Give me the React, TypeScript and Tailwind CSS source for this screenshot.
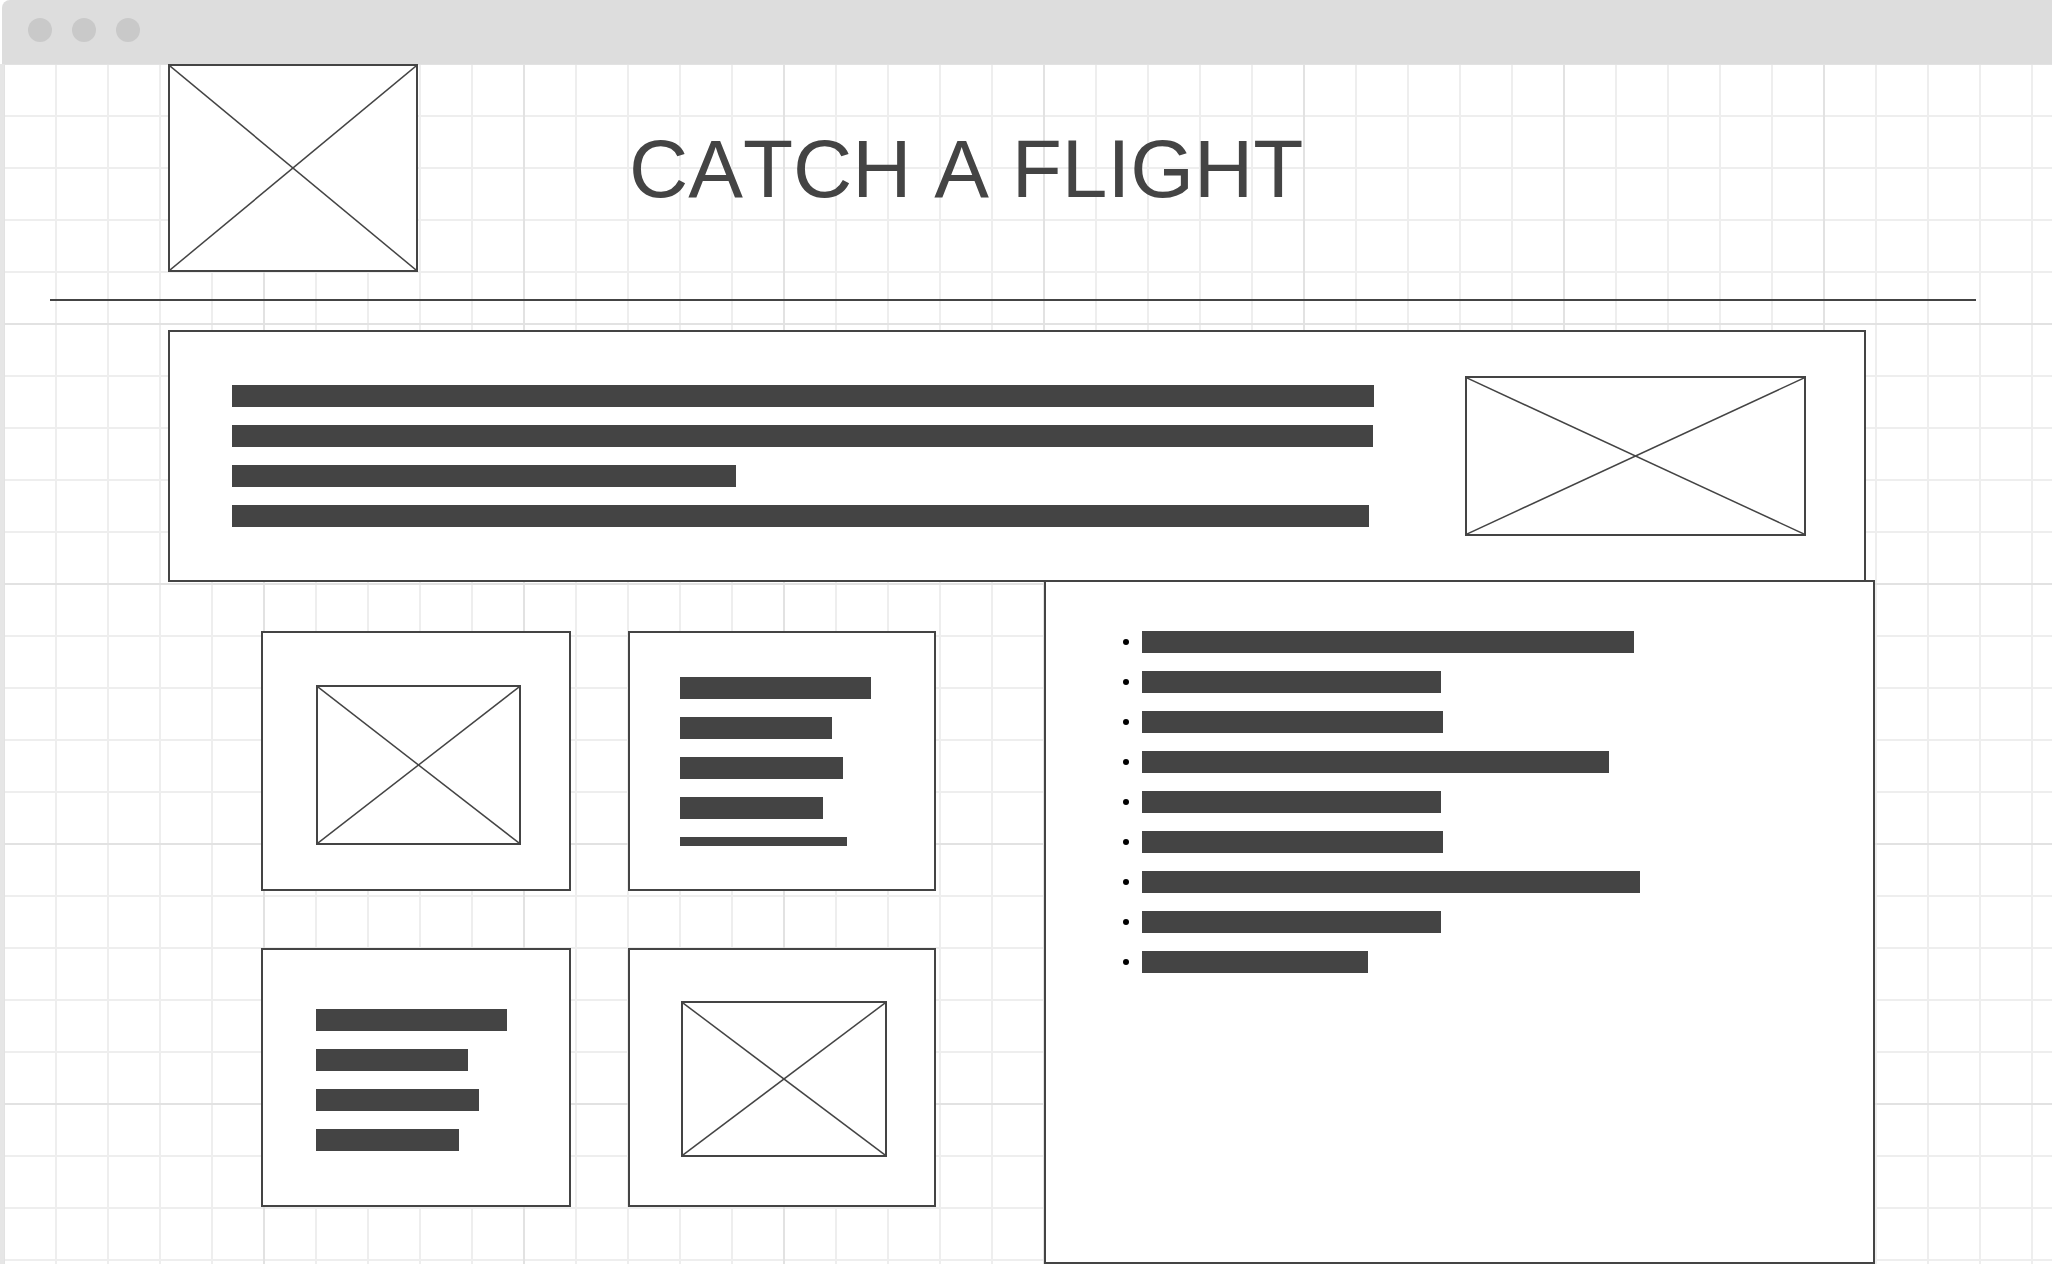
import React from "react";

function XBox({ className }: { className: string }) {
  return (
    <div className={"shrink-0 border-2 border-[#444444] bg-white " + className}>
      <svg className="block h-full w-full" viewBox="0 0 100 100" preserveAspectRatio="none">
        <line x1="0" y1="0" x2="100" y2="100" stroke="#444444" strokeWidth="1.5" vectorEffect="non-scaling-stroke" />
        <line x1="100" y1="0" x2="0" y2="100" stroke="#444444" strokeWidth="1.5" vectorEffect="non-scaling-stroke" />
      </svg>
    </div>
  );
}

function Bar({ className }: { className: string }) {
  return <div className={"bg-[#444444] " + className} />;
}

const heroBars = ["w-[1142px]", "w-[1141px]", "w-[504px]", "w-[1137px]"];
const listBars = [
  "w-[492px]",
  "w-[299px]",
  "w-[301px]",
  "w-[467px]",
  "w-[299px]",
  "w-[301px]",
  "w-[498px]",
  "w-[299px]",
  "w-[226px]",
];

export default function App() {
  return (
    <div className="relative h-[1264px] w-[2052px] overflow-hidden bg-white font-['Liberation_Sans',Arial,sans-serif]">
      {/* browser chrome */}
      <div className="ml-[2px] flex h-[64px] items-start gap-[20px] rounded-tl-[8px] bg-[#dddddd] pl-[26px] pt-[18px]">
        <span className="h-[24px] w-[24px] rounded-full bg-[#c9c9c9]" />
        <span className="h-[24px] w-[24px] rounded-full bg-[#c9c9c9]" />
        <span className="h-[24px] w-[24px] rounded-full bg-[#c9c9c9]" />
      </div>

      <div className="flex h-[1200px]">
        <div className="w-[4px] shrink-0 bg-[#e6e6e6]" />
        <div className="flex-1 [background-image:linear-gradient(to_right,#e2e2e2_2px,transparent_2px),linear-gradient(to_bottom,#e2e2e2_2px,transparent_2px),linear-gradient(to_right,#eeeeee_2px,transparent_2px),linear-gradient(to_bottom,#eeeeee_2px,transparent_2px)] [background-size:260px_260px,260px_260px,52px_52px,52px_52px] [background-position:259px_259px,259px_259px,51px_51px,51px_51px]">
          {/* header */}
          <div className="flex h-[208px] items-start">
            <XBox className="ml-[164px] h-[208px] w-[250px]" />
            <h1 className="ml-[211px] mt-[64px] whitespace-nowrap text-[82px] font-normal leading-[82px] text-[#444444] [font-kerning:none]">
              CATCH A FLIGHT
            </h1>
          </div>

          {/* rule */}
          <div className="ml-[46px] mt-[27px] h-[2px] w-[1926px] bg-[#444444]" />

          {/* hero */}
          <div className="ml-[164px] mt-[29px] flex h-[252px] w-[1698px] items-center border-2 border-[#444444] bg-white pl-[62px]">
            <div className="flex w-[1142px] flex-col gap-[18px]">
              {heroBars.map((w, i) => (
                <Bar key={i} className={"h-[22px] " + w} />
              ))}
            </div>
            <XBox className="ml-[91px] h-[160px] w-[341px]" />
          </div>

          {/* lower section */}
          <div className="-mt-[2px] flex items-start">
            <div className="ml-[257px] mt-[51px] grid grid-cols-[310px_308px] grid-rows-[260px_259px] gap-[57px]">
              <div className="border-2 border-[#444444] bg-white pl-[53px] pt-[52px]">
                <XBox className="h-[160px] w-[205px]" />
              </div>
              <div className="flex flex-col gap-[18px] border-2 border-[#444444] bg-white pl-[50px] pt-[44px]">
                <Bar className="h-[22px] w-[191px]" />
                <Bar className="h-[22px] w-[152px]" />
                <Bar className="h-[22px] w-[163px]" />
                <Bar className="h-[22px] w-[143px]" />
                <Bar className="h-[9px] w-[167px]" />
              </div>
              <div className="flex flex-col gap-[18px] border-2 border-[#444444] bg-white pl-[53px] pt-[59px]">
                <Bar className="h-[22px] w-[191px]" />
                <Bar className="h-[22px] w-[152px]" />
                <Bar className="h-[22px] w-[163px]" />
                <Bar className="h-[22px] w-[143px]" />
              </div>
              <div className="border-2 border-[#444444] bg-white pl-[51px] pt-[51px]">
                <XBox className="h-[156px] w-[206px]" />
              </div>
            </div>

            <div className="ml-[108px] h-[684px] w-[831px] border-2 border-[#444444] bg-white pl-[77px] pt-[49px]">
              <ul className="flex flex-col gap-[18px]">
                {listBars.map((w, i) => (
                  <li key={i} className="flex h-[22px] items-center gap-[13px]">
                    <span className="h-[6px] w-[6px] shrink-0 rounded-full bg-black" />
                    <Bar className={"h-[22px] " + w} />
                  </li>
                ))}
              </ul>
            </div>
          </div>
        </div>
      </div>
    </div>
  );
}
